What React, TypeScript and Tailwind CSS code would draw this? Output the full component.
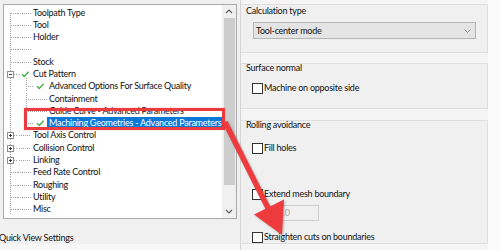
import React from "react";

type Row = {
  t: string;
  l: 0 | 1;
  exp?: "+" | "-";
  check?: boolean;
  sel?: boolean;
  last?: boolean;
  first?: boolean;
};

const rows: Row[] = [
  { t: "Toolpath Type", l: 0, first: true },
  { t: "Tool", l: 0 },
  { t: "Holder", l: 0 },
  { t: "", l: 0 },
  { t: "Stock", l: 0 },
  { t: "Cut Pattern", l: 0, exp: "-", check: true },
  { t: "Advanced Options For Surface Quality", l: 1, check: true },
  { t: "Containment", l: 1 },
  { t: "Guide Curve - Advanced Parameters", l: 1 },
  { t: "Machining Geometries - Advanced Parameters", l: 1, check: true, sel: true, last: true },
  { t: "Tool Axis Control", l: 0, exp: "+" },
  { t: "Collision Control", l: 0, exp: "+" },
  { t: "Linking", l: 0, exp: "+" },
  { t: "Feed Rate Control", l: 0 },
  { t: "Roughing", l: 0 },
  { t: "Utility", l: 0 },
  { t: "Misc", l: 0 },
];

const H = 12.3;
const M = 6.15;
const LINE = "#a3a3a3";

function Gutter({ r }: { r: Row }) {
  const w = r.l === 0 ? 27 : 43;
  const dl = { stroke: LINE, strokeWidth: 1, strokeDasharray: "1 1", shapeRendering: "crispEdges" as const };
  return (
    <svg width={w} height={H} viewBox={`0 0 ${w} ${H}`} className="shrink-0">
      <line x1={6.5} y1={r.first ? M : 0} x2={6.5} y2={H} {...dl} />
      {r.l === 0 && !r.exp && <line x1={6.5} y1={M} x2={27} y2={M} {...dl} />}
      {r.l === 0 && r.exp && (
        <>
          <line x1={9.5} y1={M} x2={r.check ? 16 : 27} y2={M} {...dl} />
          <rect x={3.5} y={M - 3} width={6} height={6} fill="#fff" stroke="#8f8f8f" strokeWidth={1} shapeRendering="crispEdges" />
          <line x1={5} y1={M} x2={8} y2={M} stroke="#3a3a3a" strokeWidth={1} shapeRendering="crispEdges" />
          {r.exp === "+" && <line x1={6.5} y1={M - 1.5} x2={6.5} y2={M + 1.5} stroke="#3a3a3a" strokeWidth={1} shapeRendering="crispEdges" />}
          {r.check && (
            <>
              <polyline points={`18,${M} 20.3,${M + 2.4} 24.6,${M - 2.4}`} fill="none" stroke="#45b049" strokeWidth={1.4} />
              <line x1={22.5} y1={M + 4} x2={22.5} y2={H} {...dl} />
            </>
          )}
        </>
      )}
      {r.l === 1 && (
        <>
          <line x1={22.5} y1={0} x2={22.5} y2={r.last ? M : H} {...dl} />
          <line x1={22.5} y1={M} x2={r.check ? 30 : 43} y2={M} {...dl} />
          {r.check && (
            <polyline points={`33,${M} 35.3,${M + 2.4} 39.6,${M - 2.4}`} fill="none" stroke="#45b049" strokeWidth={1.4} />
          )}
        </>
      )}
    </svg>
  );
}

function TreeRow({ r }: { r: Row }) {
  return (
    <div className="flex items-center h-[12.3px] whitespace-nowrap">
      <Gutter r={r} />
      {r.t && (
        <span
          className={
            r.sel
              ? "px-[2px] h-[12.3px] leading-[12.3px] bg-[#0a78d7] text-white"
              : "px-[2px] h-[12.3px] leading-[12.3px] text-[#111]"
          }
        >
          {r.t}
        </span>
      )}
    </div>
  );
}

function Chevron({ up }: { up?: boolean }) {
  return (
    <svg width="8" height="5" viewBox="0 0 8 5">
      <polyline
        points={up ? "1,4 4,1 7,4" : "1,1 4,4 7,1"}
        fill="none"
        stroke="#5f5f5f"
        strokeWidth={1.2}
      />
    </svg>
  );
}

function Check({ label }: { label: string }) {
  return (
    <div className="flex items-center h-[12px] ml-[11px]">
      <div className="w-[11px] h-[11px] border border-[#333] bg-white shrink-0" />
      <span className="ml-[1px] text-[#111]">{label}</span>
    </div>
  );
}

export default function App() {
  return (
    <div className="w-[500px] h-[250px] overflow-hidden bg-[#f0f0f0] flex relative font-['Lato',sans-serif] text-[9px] tracking-[-0.25px]">
      {/* Left column */}
      <div className="w-[240px] h-full flex flex-col">
        <div className="ml-[3px] mt-[4px] w-[234px] h-[216px] border border-[#a9a9a9] bg-white flex">
          <div className="flex-1 pt-[1.5px] overflow-hidden">
            {rows.map((r, i) => (
              <TreeRow key={i} r={r} />
            ))}
          </div>
          <div className="w-[14px] h-full bg-[#f0f0f0] flex flex-col items-center">
            <div className="h-[13px] flex items-center justify-center">
              <Chevron up />
            </div>
            <div className="w-[11px] h-[167px] bg-[#cdcdcd]" />
            <div className="flex-1" />
            <div className="h-[13px] flex items-center justify-center">
              <Chevron />
            </div>
          </div>
        </div>
        <div className="mt-[13px] h-[12px] leading-[12px] text-[#111] -ml-[1px]">Quick View Settings</div>
        <div className="flex-1" />
        <div className="h-[6px] bg-[#f7f7f7]" />
      </div>

      {/* Right column */}
      <div className="w-[248px] h-full border-l border-[#d6d6d6] bg-[#f5f5f5] pt-[4px] flex flex-col">
        <div className="h-[49px] border-y border-r border-[#dedede] bg-[#f0f0f0]">
          <div className="ml-[5px] h-[11px] leading-[11px] text-[#111]">Calculation type</div>
          <div className="ml-[12px] mt-[6px] w-[223px] h-[17px] border border-[#b5b5b5] bg-[#e4e4e4] flex items-center justify-between pl-[2px] pr-[4px]">
            <span className="text-[#111]">Tool-center mode</span>
            <svg width="7" height="4" viewBox="0 0 7 4">
              <polyline points="0.5,0.5 3.5,3.5 6.5,0.5" fill="none" stroke="#8a8a8a" strokeWidth={1} />
            </svg>
          </div>
        </div>
        <div className="mt-[10px] h-[46px] border-y border-r border-[#dedede] bg-[#f0f0f0]">
          <div className="ml-[5px] h-[8px] leading-[8px] text-[#111]">Surface normal</div>
          <div className="mt-[10px]">
            <Check label="Machine on opposite side" />
          </div>
        </div>
        <div className="mt-[11px] h-[124px] border-y border-r border-[#dedede] bg-[#f0f0f0]">
          <div className="ml-[5px] h-[8px] leading-[8px] text-[#111]">Rolling avoidance</div>
          <div className="mt-[13px]">
            <Check label="Fill holes" />
          </div>
          <div className="mt-[34px]">
            <Check label="Extend mesh boundary" />
          </div>
          <div className="ml-[27px] mt-[5px] w-[51px] h-[16px] border border-[#cfcfcf] bg-[#f0f0f0] flex items-center pl-[9px] text-[#a8a8a8]">
            4.0
          </div>
          <div className="mt-[10px]">
            <Check label="Straighten cuts on boundaries" />
          </div>
        </div>
      </div>
      <div className="flex-1 h-full bg-[#fbfbfb]" />

      {/* Annotation: red box */}
      <div className="absolute left-[24px] top-[108px] w-[201px] h-[22px] border-[3px] border-[#ec3a3f] shadow-[0_0_1px_rgba(236,58,63,0.5)]" />
      {/* Annotation: arrow */}
      <svg
        className="absolute left-0 top-0 pointer-events-none"
        width="500"
        height="250"
        viewBox="0 0 500 250"
        style={{ filter: "drop-shadow(1px 1px 1px rgba(0,0,0,0.25))" }}
      >
        <line x1="225" y1="122" x2="268.5" y2="209" stroke="#ee3b3e" strokeWidth="5.5" />
        <polygon points="282,235 254,214.5 284,199.5" fill="#ee3b3e" />
      </svg>
    </div>
  );
}
